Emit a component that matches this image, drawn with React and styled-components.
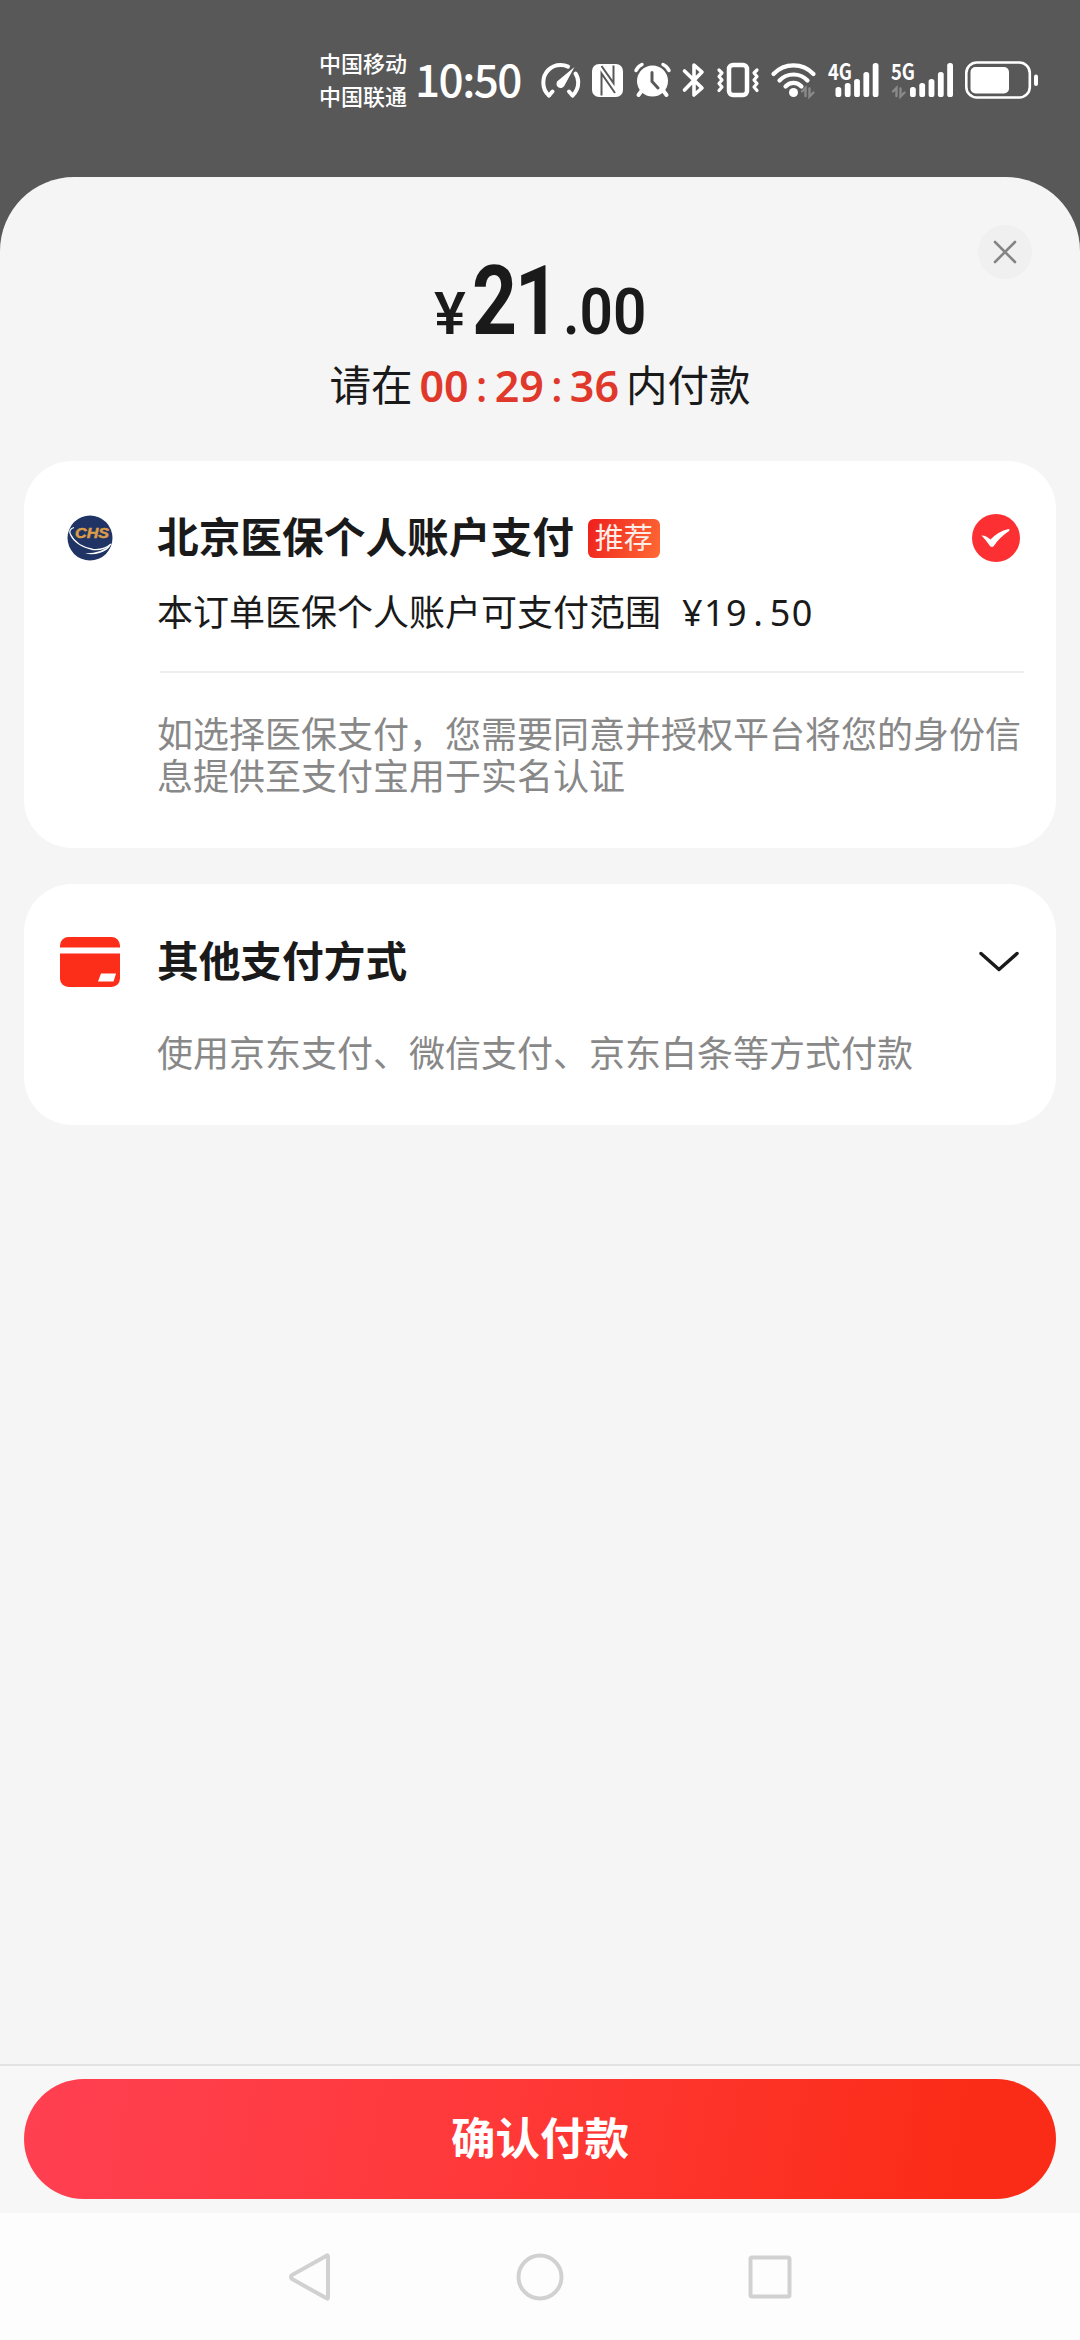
import React from 'react'
import styled, { createGlobalStyle } from 'styled-components'

const GlobalStyle = createGlobalStyle`
  * {
    box-sizing: border-box;
  }
  body {
    margin: 0;
    background: #585858;
    font-family: "Noto Sans", "Noto Sans CJK SC", sans-serif;
    color: #1a1a1a;
  }
  h2, p {
    margin: 0;
  }
  button {
    border: none;
    padding: 0;
    font-family: inherit;
  }
  svg {
    display: block;
    flex: none;
    overflow: visible;
  }
`

const SpeedIcon = () => (
  <svg width="40" height="36" viewBox="0 0 40 36" fill="none" stroke="#fff" strokeWidth="4" strokeLinecap="round">
    <path d="M8 33.5C4.5 30.500 2.300 26 2.300 20.500C2.300 10.500 10 3 19.500 3C22.400 3 24.800 3.500 27 4.600" />
    <path d="M34.500 11.500C36.300 14 37.200 17 37.200 20.500C37.200 26 34.700 30.500 31.500 33.500" />
    <path d="M8 33.500L11.500 29.500M31.500 33.500L28 29.500" />
    <path d="M33.500 5L23.500 23.500A4.200 4.200 0 1 1 17.500 18.200Z" fill="#fff" stroke="none" />
  </svg>
)

const NfcIcon = () => (
  <svg width="31" height="33" viewBox="0 0 31 33">
    <rect width="31" height="33" rx="7" fill="#fff" />
    <path d="M9.500 31.500V9.500L23 29M9.500 2L21.500 19V1.500" fill="none" stroke="#585858" strokeWidth="2" />
  </svg>
)

const AlarmIcon = () => (
  <svg width="37" height="36" viewBox="0 0 37 36" fill="none" strokeLinecap="round">
    <circle cx="18.500" cy="19" r="15.500" fill="#fff" />
    <path d="M2 8.500Q3.800 4.500 8 2.500M29 2.500Q33.200 4.500 35 8.500" stroke="#fff" strokeWidth="3.500" />
    <path d="M7.500 29L4.500 33M29.500 29L32.500 33" stroke="#fff" strokeWidth="4" />
    <path d="M18 10.500V19.500L24 26" stroke="#585858" strokeWidth="3" />
  </svg>
)

const BluetoothIcon = () => (
  <svg width="23" height="36" viewBox="0 0 23 36" fill="none" stroke="#fff" strokeWidth="3.600" strokeLinecap="round" strokeLinejoin="round">
    <path d="M2.500 9L20 26L12 33V3L20 10L2.500 28" />
  </svg>
)

const VibrateIcon = () => (
  <svg width="44" height="36" viewBox="0 0 44 36" fill="none" stroke="#fff" strokeLinecap="round" strokeLinejoin="round">
    <rect x="13" y="3" width="18" height="30" rx="4" strokeWidth="4.500" />
    <path d="M3 8L6 11L3 14.500L6 18L3 21.500L6 25L3 28.500" strokeWidth="3.200" />
    <path d="M41 8L38 11L41 14.500L38 18L41 21.500L38 25L41 28.500" strokeWidth="3.200" />
  </svg>
)

const WifiIcon = () => (
  <svg width="45" height="36" viewBox="0 0 45 36" fill="none" stroke="#fff" strokeWidth="4.200" strokeLinecap="round">
    <path d="M2.500 12C13.500 0.500 31.500 0.500 42.500 12" />
    <path d="M8.500 18.500C16 10.500 29 10.500 36.500 18.500" />
    <path d="M14.500 24.500C19 19.700 26 19.700 30.500 24.500" />
    <circle cx="22.500" cy="30.500" r="4.500" fill="#fff" stroke="none" />
    <path d="M31 29.500L34.500 26V34M38.500 26.500V34.500L42.500 30.500" stroke="#8a8a8a" strokeWidth="2.400" />
  </svg>
)

const bars = [10, 14, 18, 25, 34]

const SignalIcon = ({ label, data }) => {
  const start = data ? 21 : 9.5
  return (
    <svg width={data ? 64 : 52} height="36" viewBox={`0 0 ${data ? 64 : 52} 36`}>
      <text x="1" y="18" fill="#fff" fontSize="22" fontWeight="700" fontFamily="Noto Sans CJK SC, sans-serif" textLength="24" lengthAdjust="spacingAndGlyphs">{label}</text>
      {bars.map((h, i) => (
        <rect key={h} x={start - 1 + i * 9.3} y={35 - h} width="5.800" height={h} rx="2.600" fill="#fff" />
      ))}
      {data && <path d="M3 29.500L6.500 26V34M10.500 26.500V34.500L14.500 30.500" fill="none" stroke="#8a8a8a" strokeWidth="2.400" strokeLinecap="round" />}
    </svg>
  )
}

const BatteryIcon = () => (
  <svg width="74" height="38" viewBox="0 0 74 38">
    <rect x="1.300" y="1.500" width="63.500" height="35" rx="10.500" fill="none" stroke="#fff" strokeWidth="2.600" />
    <rect x="5.500" y="6" width="38.500" height="26.500" rx="5" fill="#fff" />
    <rect x="69" y="13.500" width="4" height="11.500" rx="2" fill="#fff" />
  </svg>
)

const ChsLogo = () => (
  <svg width="46" height="46" viewBox="0 0 46 46" fill="none">
    <circle cx="23" cy="23" r="22.500" fill="#1f3464" />
    <path d="M7 12.500Q1 14.500 3.500 19.500Q9 31 26 34.500Q37 35.500 44 29" stroke="#fff" strokeWidth="1.300" />
    <path d="M18 38.500Q30 41 40 34.500Q43 32 44 29Q36 38 18 38.500Z" fill="#fff" />
    <text x="8" y="22.500" fill="#dc9c48" stroke="#dc9c48" strokeWidth="0.500" fontSize="14.500" fontWeight="700" fontStyle="italic" fontFamily="Liberation Sans, sans-serif" textLength="34" lengthAdjust="spacingAndGlyphs">CHS</text>
  </svg>
)

const CardIcon = () => (
  <svg width="60" height="50" viewBox="0 0 60 50">
    <rect width="60" height="50" rx="8.500" fill="#fc2d19" />
    <rect y="10.500" width="60" height="6" fill="#fff" />
    <path d="M41 36.500H56L53.500 44.500H38Z" fill="#fff" />
  </svg>
)

const CheckedIcon = () => (
  <svg width="48" height="48" viewBox="0 0 48 48">
    <circle cx="24" cy="24" r="24" fill="#fc2f33" />
    <path d="M9.500 21.500Q13 20.800 18.500 25.500Q26 17.500 36.500 15Q38.500 15.500 36.800 17.300Q28 23 21.800 32Q20 34 18 32Q14 26 9.500 21.500Z" fill="#fff" />
  </svg>
)

const ChevronIcon = () => (
  <svg width="40" height="22" viewBox="0 0 40 22" fill="none" stroke="#1a1a1a" strokeWidth="3.400" strokeLinecap="round" strokeLinejoin="round">
    <path d="M2 2.500L20 18.500L38 2.500" />
  </svg>
)

const App = () => {
  return (
    <Screen>
      <GlobalStyle />
      <StatusBar>
        <Carriers>
          <span>中国移动</span>
          <span>中国联通</span>
        </Carriers>
        <Clock>10:50</Clock>
        <Icons>
          <SpeedIcon />
          <NfcIcon />
          <AlarmIcon />
          <BluetoothIcon />
          <VibrateIcon />
          <WifiIcon />
          <SignalIcon label="4G" />
          <SignalIcon label="5G" data />
          <BatteryIcon />
        </Icons>
      </StatusBar>

      <Sheet>
        <Close>
          <svg width="24" height="24" viewBox="0 0 24 24" stroke="#858585" strokeWidth="2.600" strokeLinecap="round">
            <path d="M2 2L22 22M22 2L2 22" />
          </svg>
        </Close>
        <Amount>
          <Yen>¥</Yen>
          <Yuan>21</Yuan>
          <Cents>.00</Cents>
        </Amount>
        <Countdown>
          请在
          <Timer>00<Colon>:</Colon>29<Colon>:</Colon>36</Timer>
          内付款
        </Countdown>

        <Cards>
          <Card $height={387}>
            <Head $top={49}>
              <IconSlot><ChsLogo /></IconSlot>
              <Title>北京医保个人账户支付</Title>
              <Tag>推荐</Tag>
              <Action $right={36}><CheckedIcon /></Action>
            </Head>
            <Range>
              本订单医保个人账户可支付范围
              <Price>¥19<Dot>.</Dot>50</Price>
            </Range>
            <Divider />
            <Note $top={41}>如选择医保支付，您需要同意并授权平台将您的身份信息提供至支付宝用于实名认证</Note>
          </Card>
          <Card $height={241}>
            <Head $top={50}>
              <IconSlot><CardIcon /></IconSlot>
              <Title>其他支付方式</Title>
              <Action $right={37}><ChevronIcon /></Action>
            </Head>
            <Note $top={43}>使用京东支付、微信支付、京东白条等方式付款</Note>
          </Card>
        </Cards>

        <Footer>
          <PayButton>确认付款</PayButton>
        </Footer>
      </Sheet>

      <NavBar>
        <svg width="44" height="50" viewBox="0 0 44 50">
          <path d="M40 4.500V45.500Q40 47.500 38 46L4 27Q2 25 4 23L38 4Q40 2.500 40 4.500Z" />
        </svg>
        <svg width="48" height="48" viewBox="0 0 48 48">
          <circle cx="24" cy="24" r="21.500" />
        </svg>
        <svg width="44" height="44" viewBox="0 0 44 44">
          <rect x="2.500" y="2.500" width="39" height="39" rx="1.500" />
        </svg>
      </NavBar>
    </Screen>
  )
}

export default App

const Screen = styled.div`
  width: 1080px;
  height: 2340px;
  display: flex;
  flex-direction: column;
  background: #585858;
  overflow: hidden;
`

const StatusBar = styled.div`
  height: 177px;
  padding: 46px 0 0 319px;
  display: flex;
  align-items: flex-start;
  color: #fff;
`

const Carriers = styled.div`
  width: 88px;
  display: flex;
  flex-direction: column;
  font-family: "Noto Sans CJK SC", sans-serif;
  font-size: 22px;
  line-height: 33px;
  font-weight: 500;
  white-space: nowrap;
`

const Clock = styled.div`
  width: 134px;
  padding-left: 8px;
  font-family: "Noto Sans CJK SC", sans-serif;
  font-size: 44px;
  font-weight: 500;
  line-height: 65px;
  letter-spacing: -1.500px;
`

const Icons = styled.div`
  height: 68px;
  display: flex;
  align-items: center;
  gap: 11px;
`

const Sheet = styled.main`
  position: relative;
  height: 2036px;
  display: flex;
  flex-direction: column;
  align-items: center;
  background: #f5f5f5;
  border-radius: 74px 74px 0 0;
`

const Close = styled.button`
  position: absolute;
  top: 48px;
  right: 48px;
  width: 54px;
  height: 54px;
  display: grid;
  place-items: center;
  border-radius: 50%;
  background: #f0f0f0;
`

const Amount = styled.div`
  height: 180px;
  padding: 79px 0 0 4px;
  display: flex;
  align-items: baseline;
  justify-content: center;
  font-family: Roboto, sans-serif;
  line-height: 90px;
`

const Yen = styled.span`
  width: 38px;
  font-size: 60px;
  font-weight: 500;
`

const Yuan = styled.span`
  width: 91px;
  font-size: 97px;
  font-weight: 700;
  letter-spacing: -3px;
  transform: scaleX(0.81);
  transform-origin: left;
`

const Cents = styled.span`
  width: 87px;
  font-size: 65px;
  font-weight: 600;
  transform: scaleX(0.9);
  transform-origin: left;
`

const Countdown = styled.div`
  height: 104px;
  display: flex;
  font-size: 41.500px;
  line-height: 57px;
`

const Timer = styled.span`
  margin: 0 7px;
  color: #e1382c;
  font-size: 43px;
  font-weight: 600;
`

const Colon = styled.span`
  display: inline-block;
  width: 26px;
  text-align: center;
  font-weight: 500;
`

const Cards = styled.div`
  flex: 1;
  display: flex;
  flex-direction: column;
  gap: 36px;
`

const Card = styled.section`
  width: 1032px;
  height: ${({ $height }) => $height}px;
  display: flex;
  flex-direction: column;
  border-radius: 48px;
  background: #fff;
`

const Head = styled.div`
  height: ${({ $top }) => $top + 56}px;
  padding-top: ${({ $top }) => $top}px;
  display: flex;
  align-items: center;
`

const IconSlot = styled.div`
  width: 133px;
  padding-right: 2px;
  display: flex;
  justify-content: center;
`

const Title = styled.h2`
  padding-bottom: 3px;
  font-size: 41.700px;
  line-height: 56px;
  font-weight: 700;
`

const Tag = styled.span`
  width: 72px;
  height: 39px;
  margin-left: 14px;
  border-radius: 6px;
  background: linear-gradient(110deg, #ee1f1c, #ff6a35);
  color: #ffeee8;
  font-size: 29px;
  line-height: 37px;
  text-align: center;
`

const Action = styled.div`
  margin-left: auto;
  margin-right: ${({ $right }) => $right}px;
`

const Range = styled.p`
  display: flex;
  padding-left: 133px;
  margin-top: 23px;
  font-size: 36px;
  line-height: 48px;
`

const Price = styled.span`
  margin-left: 21px;
  letter-spacing: 1.400px;
`

const Dot = styled.span`
  display: inline-block;
  width: 21.700px;
  text-align: center;
`

const Divider = styled.hr`
  width: 864px;
  height: 2px;
  margin: 34px 0 0 136px;
  border: none;
  background: #efefef;
`

const Note = styled.p`
  width: 1000px;
  padding-left: 133px;
  margin-top: ${({ $top }) => $top}px;
  font-size: 36px;
  line-height: 42px;
  color: #888;
`

const Footer = styled.footer`
  width: 100%;
  height: 149px;
  padding: 13px 24px 0;
  border-top: 2px solid #e2e3e1;
  background: #f7f7f7;
`

const PayButton = styled.button`
  width: 100%;
  height: 120px;
  padding-bottom: 8px;
  border-radius: 60px;
  background: linear-gradient(100deg, #ff4052, #ff3939 45%, #fb2c17 90%);
  color: #fff;
  font-size: 44.500px;
  font-weight: 700;
`

const NavBar = styled.nav`
  height: 127px;
  display: flex;
  align-items: center;
  justify-content: center;
  gap: 184px;
  background: #fdfdfd;

  svg {
    fill: none;
    stroke: #d1d1d1;
    stroke-width: 4px;
  }
`
